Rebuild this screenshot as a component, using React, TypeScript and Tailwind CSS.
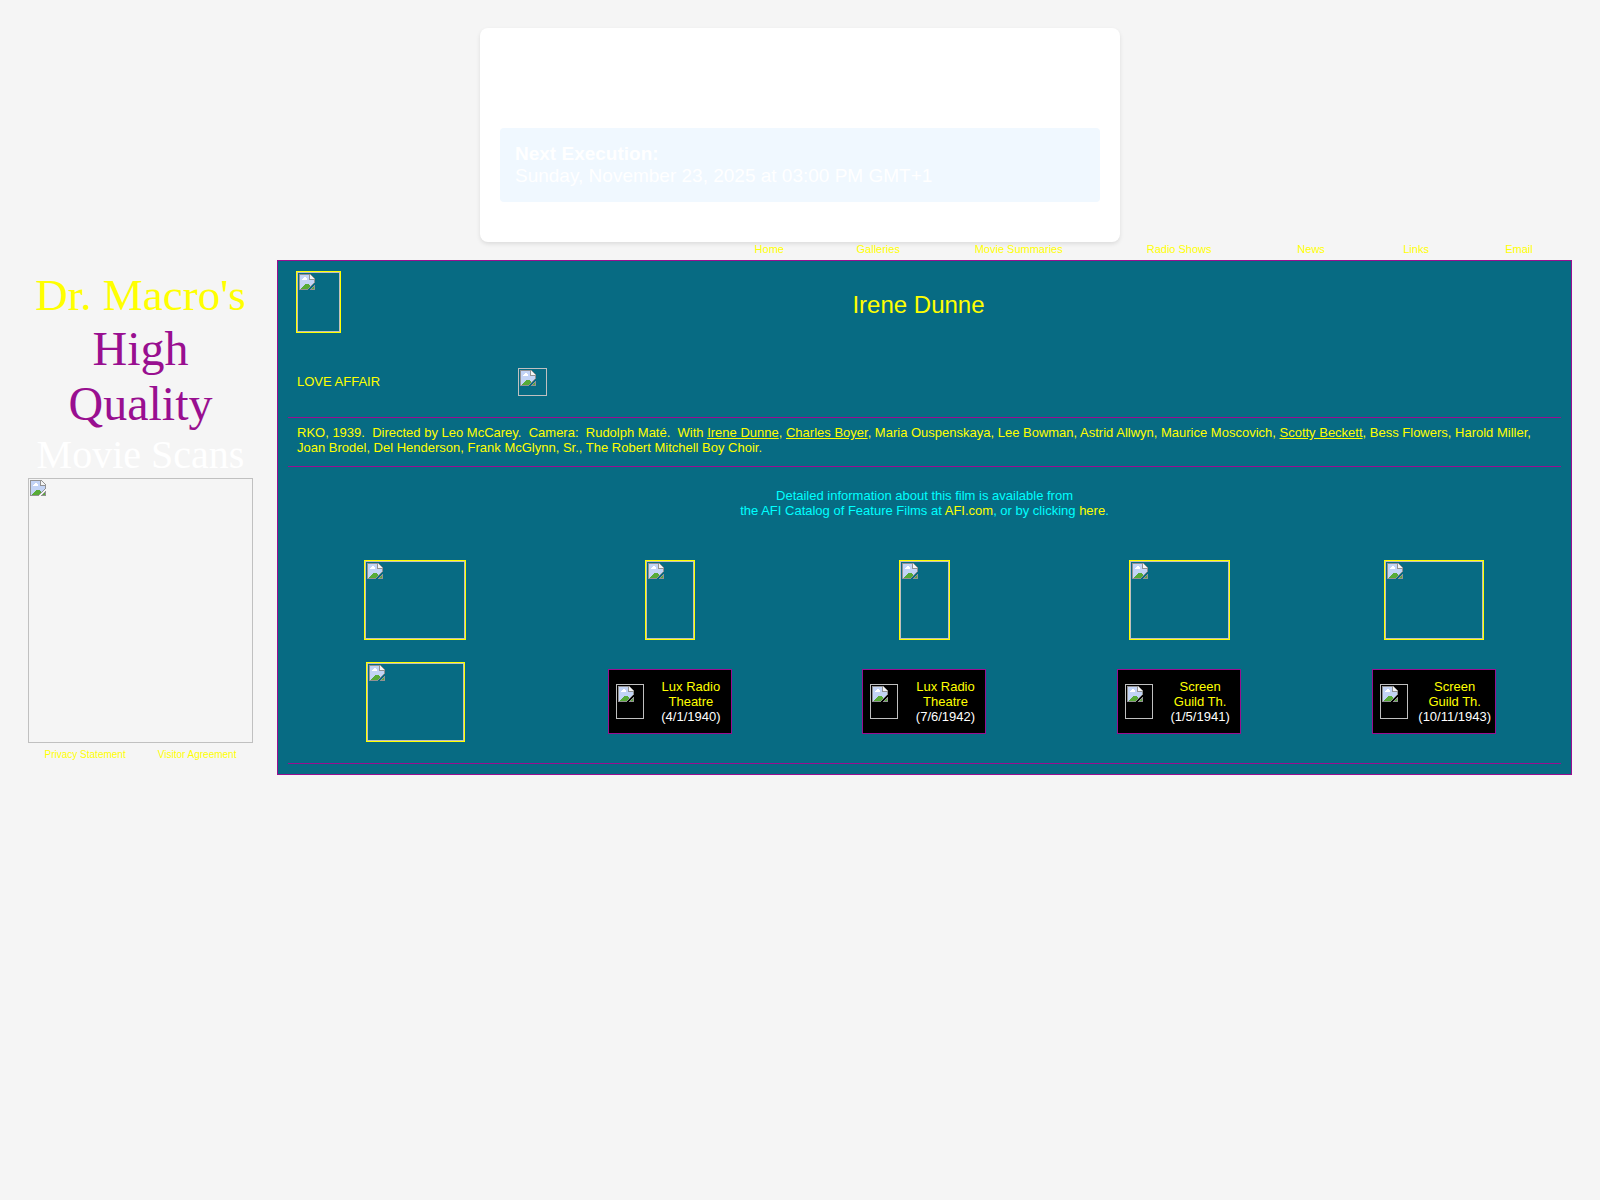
import type React from "react";

interface ThumbProps {
  className: string;
  framed?: boolean;
}

interface RadioShow {
  title: string[];
  date: string;
}

const navLinks = ["Home", "Galleries", "Movie Summaries", "Radio Shows", "News", "Links", "Email"];

const stills = [
  "w-[102px] h-20",
  "w-[50px] h-20",
  "w-[51px] h-20",
  "w-[101px] h-20",
  "w-[100px] h-20",
  "w-[99px] h-20",
];

const radioShows: RadioShow[] = [
  { title: ["Lux Radio", "Theatre"], date: "(4/1/1940)" },
  { title: ["Lux Radio", "Theatre"], date: "(7/6/1942)" },
  { title: ["Screen", "Guild Th."], date: "(1/5/1941)" },
  { title: ["Screen", "Guild Th."], date: "(10/11/1943)" },
];

const MissingImageIcon = () => (
  <svg
    width="16"
    height="16"
    viewBox="0 0 16 16"
    className="block shrink-0"
    shapeRendering="crispEdges"
    aria-hidden="true"
  >
    {/* page */}
    <path d="M0 0H12V1H13V2H14V3H15V4H16V9H15V10H14V11H13V12H12V13H11V14H10V15H9V16H0Z" fill="#929292" />
    <path d="M1 1H10V6H15V9H14V10H13V11H12V12H11V13H10V14H9V15H1Z" fill="#c3d4f6" />
    <path d="M11 1H12V2H13V3H14V4H15V5H11Z" fill="#f4f4f4" />
    {/* cloud and hill */}
    <path d="M3 6V5H4V4H5V3H7V4H8V6Z" fill="#fff" />
    <path d="M2 15V14H3V13H4V12H5V11H6V10H10V11H11V12H12V12H11V13H10V14H9V15Z" fill="#57ab37" />
    {/* torn corner */}
    <path d="M16 11V16H11V15H12V14H13V13H14V12H15V11Z" fill="#929292" />
    <path d="M15 13V15H13V14H14V13Z" fill="#57ab37" />
  </svg>
);

const Thumb: React.FC<ThumbProps> = ({ className, framed = false }) =>
  framed ? (
    <div className={`flex shrink-0 border border-[#ffff00] ${className}`}>
      <div className="flex-1 border border-[#c0c0c0] p-px">
        <MissingImageIcon />
      </div>
    </div>
  ) : (
    <div className={`shrink-0 border border-[#c0c0c0] p-px ${className}`}>
      <MissingImageIcon />
    </div>
  );

const RadioCard: React.FC<RadioShow> = ({ title, date }) => (
  <div className="mb-px flex h-[65px] w-[124px] items-center border border-[#990f90] bg-black pl-[7px]">
    <Thumb className="h-[35px] w-7" />
    <div className="ml-[7px] flex-1 text-center whitespace-nowrap">
      <a href="#" className="block text-[#ffff00]">
        {title[0]}
        <br />
        {title[1]}
      </a>
      <span className="block text-white">{date}</span>
    </div>
  </div>
);

const Rule = () => <hr className="border-t border-[#990f90]" />;

const App = () => {
  return (
    <div className="min-h-screen bg-[#f5f5f5] px-7 pt-7 font-['Liberation_Sans',Arial,sans-serif] text-[13px] leading-[15px] text-[#ffff00]">
      {/* Schedule card */}
      <div className="mx-auto max-w-[640px] rounded-lg bg-white px-5 pt-[100px] pb-10 shadow-[0_2px_4px_rgba(0,0,0,0.1)]">
        <div className="rounded bg-[#f0f8ff] p-[15px] text-[19px] leading-[22px] text-white">
          <strong className="block">Next Execution:</strong>
          <span className="block">Sunday, November 23, 2025 at 03:00 PM GMT+1</span>
        </div>
      </div>

      <div className="flex items-start gap-6">
        {/* Sidebar */}
        <aside className="mt-7 w-[225px] shrink-0 text-center">
          <h1 className="font-['Liberation_Serif','Times_New_Roman',serif] text-[48px] leading-[55px] whitespace-nowrap">
            <span className="block text-[45px] leading-[51px]">Dr. Macro's</span>
            <span className="block text-[#990f90]">High</span>
            <span className="block text-[#990f90]">Quality</span>
            <span className="block text-[40px] leading-[47px] text-white">Movie Scans</span>
          </h1>
          <Thumb className="h-[265px] w-full" />
          <div className="mt-1 flex justify-center gap-8 text-[10px]">
            <a href="#">Privacy Statement</a>
            <a href="#">Visitor Agreement</a>
          </div>
        </aside>

        <main className="min-w-0 flex-1">
          <nav className="ml-auto grid h-[18px] w-[66%] grid-cols-[104fr_114fr_167fr_154fr_110fr_100fr_106fr] text-center text-[11px] whitespace-nowrap">
            {navLinks.map((label) => (
              <a key={label} href="#">
                {label}
              </a>
            ))}
          </nav>

          <section className="border border-[#990f90] bg-[#076b83] p-[10px]">
            <div className="flex items-center pr-[65px] pl-2">
              <Thumb framed className="h-[62px] w-[45px]" />
              <h2 className="flex-1 pt-[6px] text-center text-[24px] leading-7">Irene Dunne</h2>
            </div>

            <div className="mt-[35px] mb-[21px] flex items-center pl-[9px]">
              <h3 className="w-[221px] pb-[2px]">LOVE AFFAIR</h3>
              <Thumb className="h-7 w-[29px]" />
            </div>

            <Rule />
            <p className="px-[9px] pt-[7px] pb-[11px]">
              RKO, 1939.&nbsp; Directed by Leo McCarey.&nbsp; Camera:&nbsp; Rudolph Maté.&nbsp; With{" "}
              <a href="#" className="underline">Irene Dunne</a>,{" "}
              <a href="#" className="underline">Charles Boyer</a>, Maria Ouspenskaya, Lee Bowman, Astrid
              Allwyn, Maurice Moscovich, <a href="#" className="underline">Scotty Beckett</a>, Bess
              Flowers, Harold Miller, Joan Brodel, Del Henderson, Frank McGlynn, Sr., The Robert Mitchell
              Boy Choir.
            </p>
            <Rule />

            <p className="mt-[21px] text-center text-[#00ffff]">
              Detailed information about this film is available from
              <br />
              the AFI Catalog of Feature Films at{" "}
              <a href="#" className="text-[#ffff00]">AFI.com</a>, or by clicking{" "}
              <a href="#" className="text-[#ffff00]">here</a>.
            </p>

            {/* Stills and radio shows */}
            <div className="mt-[42px] mb-[21px] grid grid-cols-5 items-center justify-items-center gap-y-[22px]">
              {stills.map((size) => (
                <Thumb key={size} framed className={size} />
              ))}
              {radioShows.map((show) => (
                <RadioCard key={show.date} {...show} />
              ))}
            </div>
            <Rule />
          </section>
        </main>
      </div>
    </div>
  );
};

export default App;
